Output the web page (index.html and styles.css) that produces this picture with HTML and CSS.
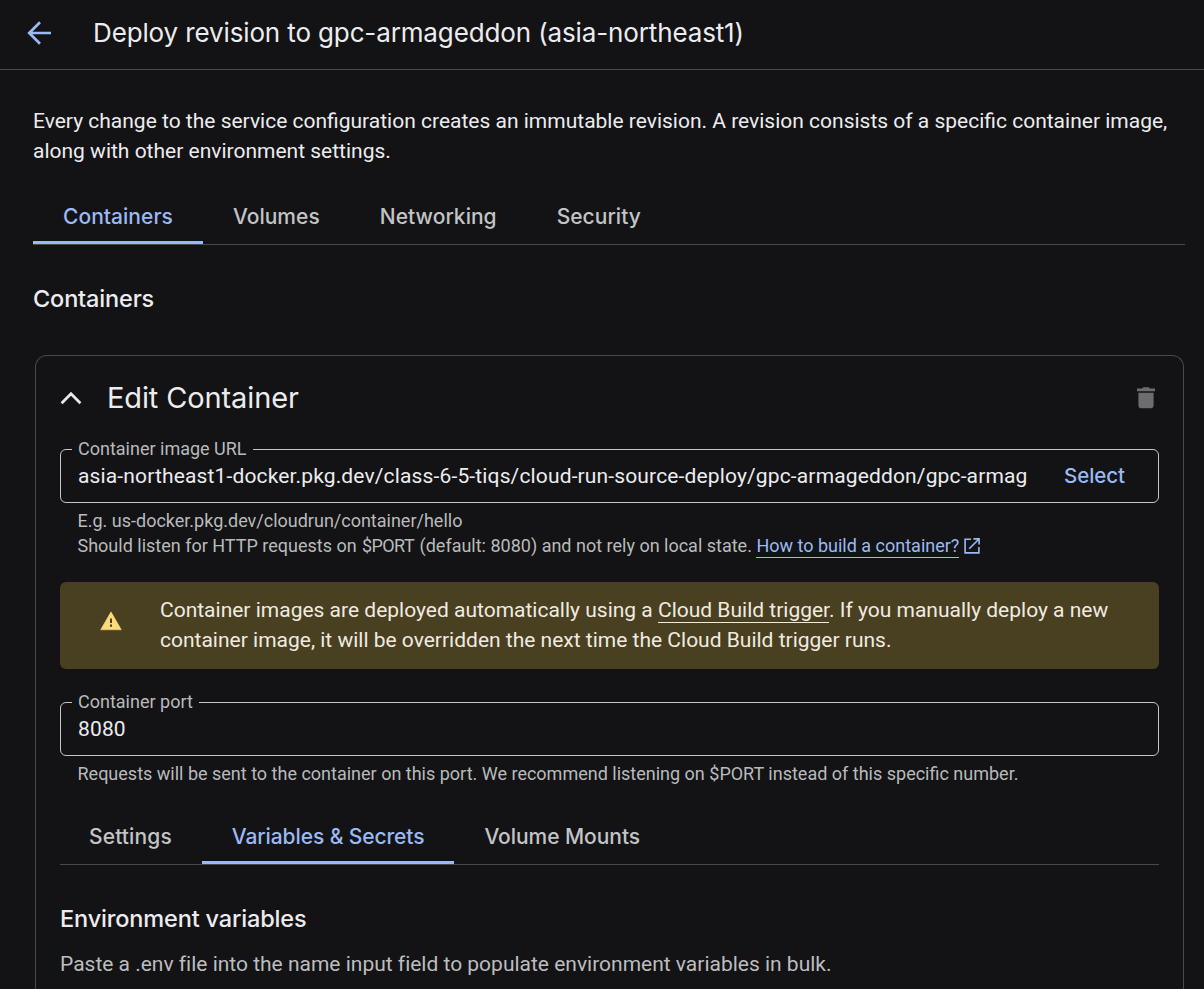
FILE: index.html
```html
<!DOCTYPE html>
<html lang="en">
<head>
<meta charset="utf-8">
<title>Deploy revision</title>
<link rel="stylesheet" href="styles.css">
</head>
<body>
<header class="topbar">
  <svg class="back" width="26" height="26" viewBox="0 0 26 26"><path d="M25 13H3M14 2.2 3.2 13 14 23.8" fill="none" stroke="#9bb9f3" stroke-width="2.7"/></svg>
  <h1 class="title">Deploy revision to gpc-armageddon (asia-northeast1)</h1>
</header>
<main class="page">
  <p class="intro">Every change to the service configuration creates an immutable revision. A revision consists of a specific container image, along with other environment settings.</p>
  <nav class="tabs">
    <a class="tab active">Containers</a>
    <a class="tab">Volumes</a>
    <a class="tab">Networking</a>
    <a class="tab">Security</a>
  </nav>
  <h2 class="section-title">Containers</h2>
  <section class="card">
    <div class="card-head">
      <svg class="chevron" width="22" height="14" viewBox="0 0 22 14"><path d="M1.6 12.2 11 2.8l9.4 9.4" fill="none" stroke="#e8e8ea" stroke-width="2.8"/></svg>
      <h2 class="card-title">Edit Container</h2>
      <svg class="trash" width="20" height="22" viewBox="0 0 20 22"><path d="M1 1.4h5.2L7.2.3h5.6l1 1.1H19v2.8H1zM2.4 5.8h15.2v13a2.4 2.4 0 0 1-2.4 2.4H4.8a2.4 2.4 0 0 1-2.4-2.4z" fill="#6c6d70"/></svg>
    </div>
    <div class="field">
      <span class="label">Container image URL</span>
      <span class="value">asia-northeast1-docker.pkg.dev/class-6-5-tiqs/cloud-run-source-deploy/gpc-armageddon/gpc-armag</span>
      <a class="select">Select</a>
    </div>
    <div class="helper">
      <p>E.g. us-docker.pkg.dev/cloudrun/container/hello</p>
      <p>Should listen for HTTP requests on <code class="env">$PORT</code> (default: 8080) and not rely on local state. <a class="link">How to build a container?</a><svg class="external" width="16" height="16" viewBox="0 0 16 16"><path d="M7 1.2H1.1v13.7h13.8V9M9.4.9h5.7v5.7M15 1 5.2 10.8" fill="none" stroke="#9bb9f3" stroke-width="1.6"/></svg></p>
    </div>
    <div class="banner">
      <svg class="warn" width="22" height="20" viewBox="0 0 22 20"><path d="M11 .8 21.4 18.8H.6z" fill="#fddb7c" stroke="#fddb7c" stroke-width=".5" stroke-linejoin="round"/><path d="M10 7.4h2v4.5h-2zM10 13.6h2v2.1h-2z" fill="#493f21"/></svg>
      <p>Container images are deployed automatically using a <a class="plain-link">Cloud Build trigger</a>. If you manually deploy a new container image, it will be overridden the next time the Cloud Build trigger runs.</p>
    </div>
    <div class="field">
      <span class="label">Container port</span>
      <span class="value">8080</span>
    </div>
    <div class="helper">
      <p>Requests will be sent to the container on this port. We recommend listening on $PORT instead of this specific number.</p>
    </div>
    <nav class="tabs inner">
      <a class="tab">Settings</a>
      <a class="tab active">Variables &amp; Secrets</a>
      <a class="tab">Volume Mounts</a>
    </nav>
    <h3 class="section-title env-title">Environment variables</h3>
    <p class="note">Paste a .env file into the name input field to populate environment variables in bulk.</p>
  </section>
</main>
</body>
</html>
```
FILE: styles.css
```css
* { box-sizing: border-box; margin: 0; padding: 0; }
html, body { height: 989px; overflow: hidden; }
body {
  display: flex;
  flex-direction: column;
  background: #131315;
  color: #ececef;
  font: 21px/30px Roboto, sans-serif;
}
.topbar {
  display: flex;
  align-items: center;
  flex: none;
  height: 70px;
  padding: 0 26px 3px;
  border-bottom: 1px solid #48494b;
}
.title {
  margin-left: 41px;
  font: 400 26px/36px Inter, sans-serif;
  letter-spacing: -0.13px;
}
.page {
  display: flex;
  flex-direction: column;
  flex: 1;
  min-height: 0;
  padding: 36px 19px 0 33px;
}
.tabs {
  display: flex;
  flex: none;
  height: 55px;
  margin-top: 24px;
  border-bottom: 1px solid #48494b;
}
.tab {
  height: 54px;
  padding: 12px 30px 0;
  border-bottom: 3px solid transparent;
  font: 500 21px/30px Inter, sans-serif;
  letter-spacing: 0.03px;
  color: #c3c4c6;
}
.tab.active { color: #9bb9f3; border-color: #9bb9f3; }
.section-title {
  margin-top: 37px;
  font: 500 23.5px/34px Inter, sans-serif;
  letter-spacing: -0.15px;
}
.card {
  flex: 1;
  min-height: 0;
  margin: 39px 1px 0 2px;
  padding: 24px 24px 0;
  border: 1px solid #48494b;
  border-bottom: 0;
  border-radius: 12px 12px 0 0;
}
.card-head { display: flex; align-items: center; height: 36px; }
.card-title {
  flex: 1;
  margin-left: 25px;
  font: 400 29px/36px Inter, sans-serif;
  letter-spacing: -0.12px;
}
.trash { margin-right: 3px; }
.field {
  position: relative;
  display: flex;
  align-items: center;
  height: 54px;
  margin-top: 33px;
  padding: 0 33px 0 17px;
  border: 1px solid #c4c7c5;
  border-radius: 6px;
}
.label {
  position: absolute;
  top: -13px;
  left: 11px;
  padding: 0 6px;
  background: #131315;
  color: #b9babc;
  font-size: 18px;
  line-height: 24px;
}
.value { flex: 1; letter-spacing: 0.145px; white-space: nowrap; }
.select { font: 500 20.5px/30px Inter, sans-serif; letter-spacing: -0.05px; color: #9bb9f3; }
.helper {
  padding: 5px 0 0 17.5px;
  font-size: 18px;
  line-height: 25px;
  color: #b9babc;
}
.env { display: inline-block; width: 54px; padding-left: 1px; font: inherit; letter-spacing: -0.6px; }
.link { padding-bottom: 1px; color: #9bb9f3; border-bottom: 1px solid #9bb9f3; }
.external { margin-left: 4.5px; vertical-align: -2px; }
.banner {
  display: flex;
  height: 87px;
  margin-top: 24px;
  padding: 13px 40px 0;
  border-radius: 6px;
  background: #493f21;
  color: #f0ebe0;
}
.warn { flex: none; margin: 16px 38px 0 0; }
.plain-link { border-bottom: 1px solid #f0ebe0; }
.inner { margin-top: 24px; }
.inner .tab { letter-spacing: -0.1px; }
.inner .tab:first-child { padding-left: 29px; letter-spacing: 0.12px; }
.inner .tab:last-child { letter-spacing: -0.05px; }
.env-title { margin-top: 37px; }
.note { margin-top: 13px; color: #bcbdbf; letter-spacing: -0.005px; }
```
